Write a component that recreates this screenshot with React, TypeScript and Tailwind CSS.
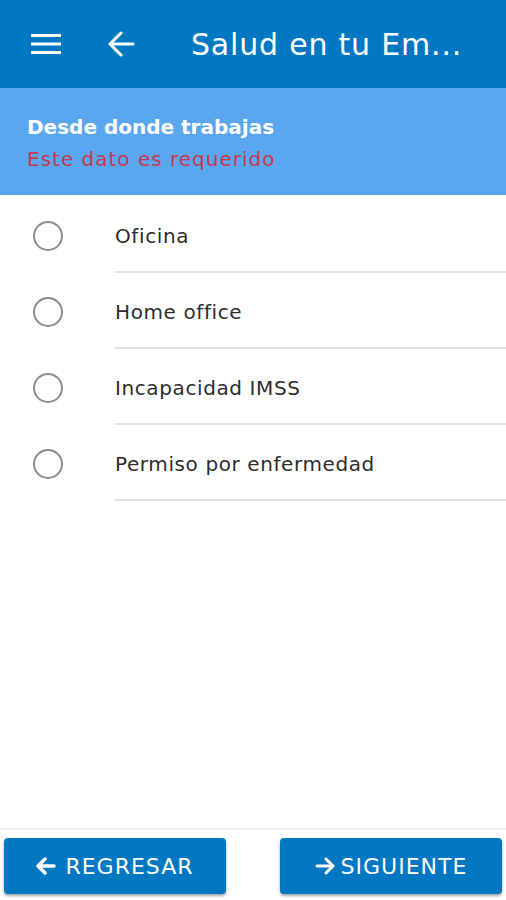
import React from "react";

const options = ["Oficina", "Home office", "Incapacidad IMSS", "Permiso por enfermedad"];

export default function App() {
  return (
    <div
      className="w-[506px] h-[900px] flex flex-col bg-white overflow-hidden"
      style={{ fontFamily: '"DejaVu Sans", "Open Sans", sans-serif' }}
    >
      <header className="h-[88px] bg-[#0277c2] flex items-center shrink-0">
        <div className="w-[90px] flex justify-center pl-[1px]">
          <svg width="30" height="22" viewBox="0 0 30 22">
            <rect x="0" y="1" width="30" height="3" fill="white" />
            <rect x="0" y="9.5" width="30" height="3" fill="white" />
            <rect x="0" y="18" width="30" height="3" fill="white" />
          </svg>
        </div>
        <div className="w-[62px] flex justify-start pl-[18px]">
          <svg width="27" height="26" viewBox="0 0 27 26" fill="none" stroke="white" strokeWidth="3" strokeLinecap="round" strokeLinejoin="round">
            <path d="M25 13H3" />
            <path d="M13 2L2 13l11 11" />
          </svg>
        </div>
        <div className="pl-[39px] text-white text-[30px] tracking-[0.8px] whitespace-nowrap">Salud en tu Em...</div>
      </header>
      <section className="h-[107px] bg-[#5ba7ef] shrink-0 pl-[27px] pt-[26px]">
        <div className="text-white text-[20px] font-semibold leading-[26px]">Desde donde trabajas</div>
        <div className="text-[#c5394f] text-[20px] tracking-[1px] leading-[26px] mt-[6px]">Este dato es requerido</div>
      </section>
      <div className="flex-1 flex flex-col pt-[2px]">
        {options.map((o) => (
          <div key={o} className="h-[76px] flex items-stretch">
            <div className="w-[115px] flex items-center pl-[33px] pt-[1px]">
              <div className="w-[30px] h-[30px] rounded-full border-[2.5px] border-[#8c8c8c]" />
            </div>
            <div className="flex-1 flex items-center border-b-2 border-[#e3e3e3] text-[20px] tracking-[0.6px] text-[#2d2d2d] pt-[4px]">
              {o}
            </div>
          </div>
        ))}
      </div>
      <div className="h-[72px] shrink-0 border-t-2 border-[#eeeeee] flex justify-between items-start pt-[8px] px-[4px]">
        <button className="w-[222px] h-[56px] rounded-[4px] bg-[#0277c2] text-white text-[22px] tracking-[1px] flex items-center justify-center gap-[9px] shadow-[0_2px_3px_rgba(0,0,0,0.35)]">
          <svg width="20" height="18" viewBox="0 0 20 18" fill="none" stroke="white" strokeWidth="3.5" strokeLinecap="round" strokeLinejoin="round">
            <path d="M18 9H3" />
            <path d="M9 2L2 9l7 7" />
          </svg>
          REGRESAR
        </button>
        <button className="w-[222px] h-[56px] rounded-[4px] bg-[#0277c2] text-white text-[22px] tracking-[1px] flex items-center justify-center gap-[6px] shadow-[0_2px_3px_rgba(0,0,0,0.35)]">
          <svg width="20" height="18" viewBox="0 0 20 18" fill="none" stroke="white" strokeWidth="3" strokeLinecap="round" strokeLinejoin="round">
            <path d="M2 9h15" />
            <path d="M11 2l7 7-7 7" />
          </svg>
          SIGUIENTE
        </button>
      </div>
    </div>
  );
}
